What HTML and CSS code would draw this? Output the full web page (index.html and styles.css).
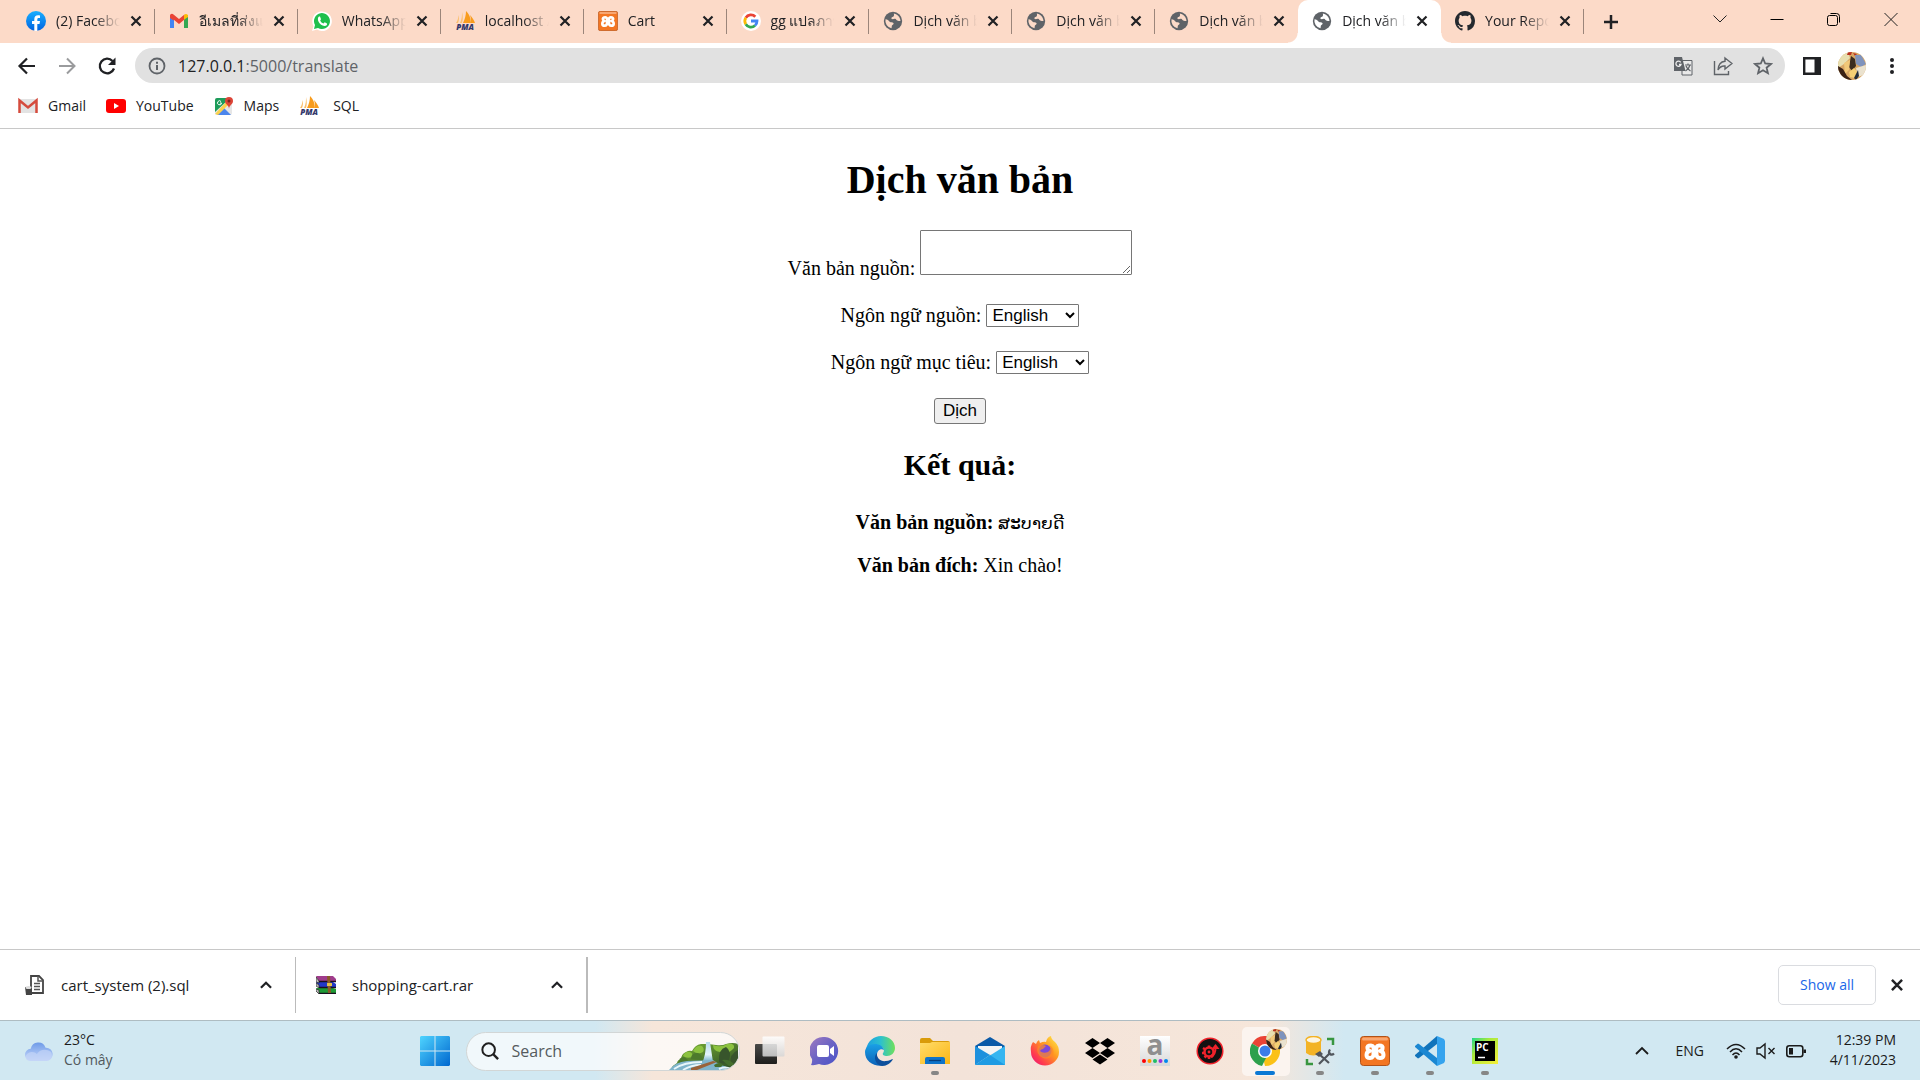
FILE: index.html
```html
<!DOCTYPE html>
<html lang="vi">
<head>
<meta charset="utf-8">
<title>Dịch văn bản</title>
<link rel="stylesheet" href="styles.css">
</head>
<body>
<svg class="defs" width="0" height="0" aria-hidden="true">
  <defs>
    <linearGradient id="fbg" x1="0" y1="0" x2="0" y2="1"><stop offset="0" stop-color="#19afff"/><stop offset="1" stop-color="#0062e0"/></linearGradient>
    <linearGradient id="wing" x1="0" y1="0" x2="1" y2="1"><stop offset="0" stop-color="#4fd4ff"/><stop offset="1" stop-color="#0067cf"/></linearGradient>
    <linearGradient id="cloudg" x1="0" y1="0" x2="0" y2="1"><stop offset="0" stop-color="#6f9be8"/><stop offset="1" stop-color="#c8d9fa"/></linearGradient>
    <linearGradient id="chatg" x1="0" y1="0" x2="1" y2="1"><stop offset="0" stop-color="#a07bc0"/><stop offset=".5" stop-color="#6a63c4"/><stop offset="1" stop-color="#4a52c8"/></linearGradient>
    <linearGradient id="edgeg" x1="0" y1="0" x2="1" y2="0"><stop offset="0" stop-color="#1b9de2"/><stop offset=".5" stop-color="#2cc0cf"/><stop offset="1" stop-color="#6fe05a"/></linearGradient>
    <linearGradient id="edgeb" x1="0" y1="0" x2="0" y2="1"><stop offset="0" stop-color="#1aa0e6"/><stop offset="1" stop-color="#0c62b8"/></linearGradient>
    <linearGradient id="foldg" x1="0" y1="0" x2="1" y2="1"><stop offset="0" stop-color="#ffdc6b"/><stop offset="1" stop-color="#fcb614"/></linearGradient>
    <linearGradient id="ffg" x1="1" y1="0" x2="0" y2="1"><stop offset="0" stop-color="#fff44f"/><stop offset=".4" stop-color="#ff9a1f"/><stop offset=".75" stop-color="#ff3850"/><stop offset="1" stop-color="#e0108a"/></linearGradient>
    <linearGradient id="ag" x1="0" y1="0" x2="0" y2="1"><stop offset="0" stop-color="#fff"/><stop offset="1" stop-color="#d8d8d8"/></linearGradient>
    <linearGradient id="pcg" x1="0" y1="0" x2="1" y2="1"><stop offset="0" stop-color="#1fd88b"/><stop offset=".35" stop-color="#a8ea3c"/><stop offset="1" stop-color="#f6ee3a"/></linearGradient>
    <linearGradient id="darkg" x1="0" y1="0" x2="0" y2="1"><stop offset="0" stop-color="#4a4a48"/><stop offset="1" stop-color="#1e1e1c"/></linearGradient>
    <linearGradient id="paneg" x1="0" y1="0" x2="0" y2="1"><stop offset="0" stop-color="#fff"/><stop offset="1" stop-color="#d6d6d6"/></linearGradient>
    <linearGradient id="water" x1="0" y1="0" x2="0" y2="1"><stop offset="0" stop-color="#b9dcec"/><stop offset=".6" stop-color="#e4f4fa"/><stop offset="1" stop-color="#5fa3c0"/></linearGradient>
    <linearGradient id="hill" x1="0" y1="0" x2="1" y2="1"><stop offset="0" stop-color="#7db536"/><stop offset="1" stop-color="#2c4d25"/></linearGradient>
    <symbol id="close" viewBox="0 0 16 16"><path d="M3.5 3.5l9 9m0-9l-9 9" stroke="#202124" stroke-width="2.2" fill="none"/></symbol>
    <symbol id="globe" viewBox="0 0 24 24"><circle cx="12" cy="12" r="11" fill="#5f6368"/><path d="M3 10c2.500 0 3.500 1.500 5 3 1.200 1.200 3.500.2 4.500 1.500.8 1-.5 2-1.500 2.700-.8.600-.2 2.200-.8 3.600A9.200 9.200 0 0 1 3 10zM13 2.900c4 .5 6.500 3.500 7.500 6.600l.5 2.500c-1.500-.2-2.500.5-4-.5-1.500-1-1-1.800-2.500-2.200-1.300-.3-2.200 1-3.800.4-1.200-.5-.8-2 .5-2.400 1.500-.5 2.600-1.500 1.800-4.400z" fill="var(--tab)"/></symbol>
    <symbol id="pma" viewBox="0 0 20 20"><path d="M5 12C7 8 7 4 7 1c1 4 1 8 0 11zM1 12c2-3 2-5 3-8 0 3 0 6-1 8z" fill="#fbbf6c"/><path d="M8 12C10 8 11 4 11 0c4 4 5 8 4 12zM15 12c1-3 1-5 0-8 2 2 4 5 5 8z" fill="#f89c1e"/><text x="10" y="19" font-family="Open Sans,sans-serif" font-size="8" font-weight="800" font-style="italic" fill="#33386b" text-anchor="middle">PMA</text></symbol>
    <symbol id="xampp" viewBox="0 0 30 30"><rect x=".5" y=".5" width="29" height="29" rx="3" fill="#f37623" stroke="#b0521a"/><rect x="2" y="1.500" width="26" height="3" rx="1.500" fill="#f8a671"/><path d="M11 9.500q3.500 0 2.500 5.500h3q-1-5.500 2.500-5.500 4.500 0 3.500 3.300-.5 1.700-2.300 2.200 3.300.500 3.300 4 0 3-3.500 3-4 0-3.500-5.500h-3q.5 5.500-3.500 5.500-3.500 0-3.500-3 0-3.500 3.300-4-1.800-.5-2.300-2.200-1-3.300 3.500-3.300z" fill="none" stroke="#fff" stroke-width="4" stroke-linejoin="round"/></symbol>
    <symbol id="portrait" viewBox="0 0 28 28"><clipPath id="pc"><circle cx="14" cy="14" r="14"/></clipPath><g clip-path="url(#pc)"><path fill="#d9a765" d="M0 0h28v28H0z"/><path fill="#e8dfb0" d="M0 5l10-5 2 6-6 6-6 4z"/><path fill="#3a2c20" d="M13 4l4 3 1 7-4 5-3-4z"/><path fill="#f1c878" d="M6 11l6-3-1 10-4 4z"/><path fill="#b83021" d="M10 0l4 0-1 3-4 0zM15 1l4 1-2 2z"/><path fill="#7f93bd" d="M17 3l6 0 5 9-5 3-5-3z"/><path fill="#eae2cf" d="M18 16l10-3v9l-8 3z"/><path fill="#3a2114" d="M0 14l5 3 4 7 5 4H0z"/><path fill="#f5cf74" d="M11 20l5-4 4 5-3 5-5-1z"/><path fill="#232c3a" d="M16 26l4-8 1 6-3 4z"/></g></symbol>
    <symbol id="up" viewBox="0 0 16 16"><path d="M3.500 10.500L8 6l4.500 4.500" fill="none" stroke="#202124" stroke-width="2"/></symbol>
  </defs>
</svg>

<header class="browser">
  <div class="strip">
    <nav class="tabs">
      <div class="tab"><svg class="fav" viewBox="0 0 20 20"><circle cx="10" cy="10" r="10" fill="url(#fbg)"/><path d="M8.300 20v-7H6v-3h2.300V8.200c0-2.700 1.400-4 3.700-4 .8 0 1.500.1 2 .2v2.500h-1.300c-1.100 0-1.400.6-1.400 1.300V10H14l-.5 3h-2.200v7z" fill="#fff"/></svg><a href="#" class="title">(2) Facebook</a><button aria-label="Close tab"><svg><use href="#close"/></svg></button></div>
      <div class="tab"><svg class="fav" viewBox="0 0 20 20"><path d="M1 17V4l4 3v10z" fill="#4285f4"/><path d="M15 17V7l4-3v13z" fill="#34a853"/><path d="M1 7V5c0-2 2-3 3.500-1.500L10 8l5.500-4.500v5L10 13 4.500 8.500v1z" fill="#ea4335"/><path d="M15 8.800V4c2-2 4-.5 4 1v1z" fill="#fbbc04"/></svg><a href="#" class="title">อีเมลที่ส่งแล้ว</a><button aria-label="Close tab"><svg><use href="#close"/></svg></button></div>
      <div class="tab"><svg class="fav" viewBox="0 0 20 20"><path d="M0 20l1.500-5A9.800 9.800 0 1 1 5 18.600z" fill="#fff"/><path d="M2 18l1-4a8 8 0 1 1 3 3z" fill="#1fbf4c"/><path d="M7 5.500c-3 2.500.5 9 5.500 9.500 2 0 3-1.500 2.500-2.500l-2.300-1.200-1.200 1.200c-1.500-.5-2.700-1.700-3.300-3.100L9 8.300 8 5.600z" fill="#fff"/></svg><a href="#" class="title">WhatsApp</a><button aria-label="Close tab"><svg><use href="#close"/></svg></button></div>
      <div class="tab"><svg class="fav"><use href="#pma"/></svg><a href="#" class="title">localhost / 127</a><button aria-label="Close tab"><svg><use href="#close"/></svg></button></div>
      <div class="tab"><svg class="fav"><use href="#xampp"/></svg><a href="#" class="title">Cart</a><button aria-label="Close tab"><svg><use href="#close"/></svg></button></div>
      <div class="tab"><svg class="fav" viewBox="0 0 20 20"><circle cx="10" cy="10" r="10" fill="#fff"/><g fill="none" stroke-width="2.800"><path d="M4.800 6.800A6 6 0 0 1 14.300 5.800" stroke="#ea4335"/><path d="M4.800 13.200a6 6 0 0 1 0-6.400" stroke="#fbbc05"/><path d="M14 14.500a6 6 0 0 1-9.200-1.300" stroke="#34a853"/><path d="M10 10h6a6 6 0 0 1-2 4.500" stroke="#4285f4"/></g></svg><a href="#" class="title">gg แปลภาษา</a><button aria-label="Close tab"><svg><use href="#close"/></svg></button></div>
      <div class="tab"><svg class="fav"><use href="#globe"/></svg><a href="#" class="title">Dịch văn bản</a><button aria-label="Close tab"><svg><use href="#close"/></svg></button></div>
      <div class="tab"><svg class="fav"><use href="#globe"/></svg><a href="#" class="title">Dịch văn bản</a><button aria-label="Close tab"><svg><use href="#close"/></svg></button></div>
      <div class="tab before"><svg class="fav"><use href="#globe"/></svg><a href="#" class="title">Dịch văn bản</a><button aria-label="Close tab"><svg><use href="#close"/></svg></button></div>
      <div class="tab active"><svg class="fav"><use href="#globe"/></svg><a href="#" class="title">Dịch văn bản</a><button aria-label="Close tab"><svg><use href="#close"/></svg></button></div>
      <div class="tab"><svg class="fav" viewBox="0 0 16 16"><path fill="#24292f" d="M8 0C3.580 0 0 3.580 0 8c0 3.540 2.290 6.530 5.470 7.590.4.070.55-.17.55-.38 0-.19-.01-.82-.01-1.490-2.010.37-2.530-.49-2.690-.94-.09-.23-.48-.94-.82-1.130-.28-.15-.68-.52-.01-.53.63-.01 1.080.58 1.230.82.720 1.210 1.870.87 2.330.66.070-.52.280-.87.510-1.070-1.780-.2-3.640-.89-3.640-3.950 0-.87.310-1.590.82-2.150-.08-.2-.36-1.020.08-2.120 0 0 .67-.21 2.200.82.640-.18 1.320-.27 2-.27s1.360.09 2 .27c1.530-1.040 2.200-.82 2.200-.82.440 1.100.160 1.920.08 2.120.510.560.82 1.270.82 2.150 0 3.070-1.870 3.750-3.650 3.950.290.250.540.730.540 1.480 0 1.070-.01 1.930-.01 2.200 0 .21.150.46.550.38A8.010 8.010 0 0 0 16 8c0-4.420-3.580-8-8-8z"/></svg><a href="#" class="title">Your Repositories</a><button aria-label="Close tab"><svg><use href="#close"/></svg></button></div>
    </nav>
    <button class="newtab" aria-label="New tab"><svg width="16" height="16" viewBox="0 0 16 16"><path d="M8 1v14M1 8h14" stroke="#202124" stroke-width="2.500"/></svg></button>
    <div class="winctl">
      <button aria-label="Search tabs"><svg viewBox="0 0 16 16"><path d="M1.500 4.500L8 11l6.500-6.500" fill="none" stroke="#222"/></svg></button>
      <button aria-label="Minimize"><svg viewBox="0 0 16 16"><path d="M1.500 8.500h13" stroke="#000"/></svg></button>
      <button aria-label="Restore"><svg viewBox="0 0 16 16"><rect x="1.500" y="4.500" width="10" height="10" rx="2" fill="none" stroke="#000"/><path d="M4.500 2.500h6q3 0 3 3v6" fill="none" stroke="#000"/></svg></button>
      <button aria-label="Close"><svg viewBox="0 0 16 16"><path d="M1.500 2l13 13m0-13l-13 13" stroke="#222"/></svg></button>
    </div>
  </div>

  <div class="toolbar">
    <button aria-label="Back"><svg viewBox="0 0 20 20"><path d="M18 10H3m7-7.500L2.500 10l7.500 7.500" fill="none" stroke="#202124" stroke-width="2.200"/></svg></button>
    <button aria-label="Forward"><svg viewBox="0 0 20 20"><path d="M2 10h15m-7-7.500l7.500 7.500-7.500 7.500" fill="none" stroke="#9a9b9d" stroke-width="2"/></svg></button>
    <button aria-label="Reload"><svg viewBox="0 0 20 20"><path d="M17 12.500A7.300 7.300 0 1 1 15.500 5" fill="none" stroke="#202124" stroke-width="2.300"/><path d="M18.500 1.500V9H11z" fill="#202124"/></svg></button>
    <div class="omnibox">
      <svg class="info" viewBox="0 0 18 18"><circle cx="9" cy="9" r="7.500" fill="none" stroke="#5f6368" stroke-width="1.800"/><path d="M9 8v5M9 4.700v2" stroke="#5f6368" stroke-width="2"/></svg>
      <span class="url"><span class="host">127.0.0.1</span>:5000/translate</span>
      <svg class="oi" viewBox="0 0 20 20"><path d="M9 4.500h10V19H9z" fill="#e9e9e9" stroke="#5f6368"/><path d="M1 1h8l3.500 14H1z" fill="#5f6368"/><path d="M7.700 6.300A2.600 2.600 0 1 0 8 8.500H6" stroke="#eee" stroke-width="1.300" fill="none"/><path d="M12 9h6m-3-1.500V9m2 0q-1 4-4.500 6M13 10q1 3 4.500 5" stroke="#5f6368" stroke-width="1.200" fill="none"/></svg>
      <svg class="oi" viewBox="0 0 20 20"><path d="M1.500 5v13.500h14V15" fill="none" stroke="#5f6368" stroke-width="1.400"/><path d="M12 2l7 5.500-7 5.500V10q-4.500-.5-7 4Q5.500 6 12 5.300z" fill="none" stroke="#5f6368" stroke-width="1.400"/></svg>
      <svg class="oi" viewBox="0 0 20 20"><path d="M10 2.300l2.200 5.200 5.700.5-4.300 3.700 1.300 5.500-4.900-3-4.900 3 1.300-5.500L2.100 8l5.700-.5z" fill="none" stroke="#5f6368" stroke-width="1.800"/></svg>
    </div>
    <div class="right">
      <button aria-label="Side panel"><svg class="s18" viewBox="0 0 18 18"><path d="M1.200 1.200h15.600v15.600H1.200z" fill="#fff" stroke="#202124" stroke-width="2.400"/><path d="M11.500 1H18v16h-6.500z" fill="#202124"/></svg></button>
      <button aria-label="Profile"><svg class="s28"><use href="#portrait"/></svg></button>
      <button aria-label="Menu"><svg class="s18" viewBox="0 0 18 18"><circle cx="9" cy="3" r="2" fill="#202124"/><circle cx="9" cy="9" r="2" fill="#202124"/><circle cx="9" cy="15" r="2" fill="#202124"/></svg></button>
    </div>
  </div>

  <nav class="bookmarks">
    <a href="#"><svg viewBox="0 0 20 20"><path d="M1 3h18v14H1z" fill="#e3e3e3"/><path d="M1.500 17V4.500l8.500 7 8.500-7V17" fill="none" stroke="#d54b3d" stroke-width="2.500"/></svg>Gmail</a>
    <a href="#"><svg viewBox="0 0 20 20"><rect y="3" width="20" height="14" rx="3" fill="#f00"/><path d="M8 7l5 3-5 3z" fill="#fff"/></svg>YouTube</a>
    <a href="#"><svg viewBox="0 0 20 20"><rect x="1" y="2" width="17" height="17" rx="2" fill="#e6e6e6"/><path d="M1 16V4q0-2 2-2h10v3z" fill="#1d9c5a"/><path d="M3 19l7-7 7 7z" fill="#4b86ed"/><path d="M1 18L13 5l2 3L4 19z" fill="#fcd24c"/><path d="M15 13c0-4-4-4.500-4-8a4 4 0 0 1 8 0c0 3.500-4 4-4 8z" fill="#dc4437"/><circle cx="15" cy="5" r="1.500" fill="#7a241b"/><path d="M7 5.500A2 2 0 1 0 7.500 7H6" fill="none" stroke="#fff"/></svg>Maps</a>
    <a href="#" class="sql"><svg><use href="#pma"/></svg>SQL</a>
  </nav>
</header>

<main class="page">
  <h1>Dịch văn bản</h1>
  <form>
    <div class="row"><label for="src">Văn bản nguồn:</label> <textarea id="src"></textarea></div>
    <div class="row"><label for="from">Ngôn ngữ nguồn:</label> <select id="from"><option>English</option></select></div>
    <div class="row"><label for="to">Ngôn ngữ mục tiêu:</label> <select id="to"><option>English</option></select></div>
    <div class="row"><button type="button" class="submit">Dịch</button></div>
  </form>
  <h2>Kết quả:</h2>
  <p><strong>Văn bản nguồn:</strong> <span lang="lo" class="lao">ສະບາຍດີ</span></p>
  <p><strong>Văn bản đích:</strong> Xin chào!</p>
</main>

<aside class="downloads">
  <div class="dl"><svg class="file" viewBox="0 0 20 20"><path d="M6 1h8l4 4v13H6z" fill="#fff" stroke="#444" stroke-width="1.800"/><path d="M13 1v5h5M9 8.500h6M9 11.500h6M9 14.500h6" stroke="#555" stroke-width="1.500" fill="none"/><path d="M0 12h7v8H1z" fill="#444"/><ellipse cx="3.500" cy="12.500" rx="3" ry="1.500" fill="#ddd"/></svg><a href="#">cart_system (2).sql</a><button aria-label="Options"><svg><use href="#up"/></svg></button></div>
  <div class="dl"><svg class="file" viewBox="0 0 20 20"><path d="M0 1h17l3 3v3H3z" fill="#a03c8c"/><path d="M0 7h17l3 2v3H3z" fill="#2238c8"/><path d="M0 13h17l3 1v4H3z" fill="#1e9a35"/><path d="M0 2l3 4v2L0 7zm0 6l3 2v3l-3-2zm0 6l3 1v4l-3-3z" fill="#bbb" stroke="#222" stroke-width=".7"/><path d="M3 6.500h17M3 12.500h17M3 18.300h17" stroke="#1a1020" stroke-width="1.300"/><path d="M11 1h3l1 17h-3z" fill="#8a5a28"/><path d="M11 8h5v3h-5z" fill="#e5c04a"/></svg><a href="#">shopping-cart.rar</a><button aria-label="Options"><svg><use href="#up"/></svg></button></div>
  <button class="showall">Show all</button>
  <button class="dismiss" aria-label="Close downloads"><svg width="18" height="18"><use href="#close"/></svg></button>
</aside>

<footer class="taskbar">
  <div class="weather">
    <svg width="30" height="22" viewBox="0 0 26 20"><path d="M6 19a5.500 5.500 0 0 1-.5-11A7 7 0 0 1 19 7a6 6 0 0 1 1 12z" fill="url(#cloudg)"/><path d="M5 19c-3 0-4.500-2-4-4.500C3 10 9 10 11 13c3-5 9-5 13-2 2 4-.5 8-4 8z" fill="#c3d4f7" opacity=".7"/></svg>
    <div class="stack"><span>23°C</span><span class="dim">Có mây</span></div>
  </div>
  <div class="apps">
    <button class="app" aria-label="Start"><svg viewBox="0 0 30 30"><path d="M1 0h13.500v14.500H0V1zM15.500 0H29l1 1v13.500H15.500zM0 15.500h14.500V30H1l-1-1zM15.500 15.500H30V29l-1 1H15.500z" fill="url(#wing)"/></svg></button>
    <div class="search">
      <svg class="mag" viewBox="0 0 20 20"><circle cx="8.500" cy="8.500" r="7" fill="none" stroke="#1f1f1f" stroke-width="2.200"/><path d="M13.500 13.500L19 19" stroke="#1f1f1f" stroke-width="2.600"/></svg>
      <input type="text" placeholder="Search" aria-label="Search">
      <svg class="scene" viewBox="0 0 70 28"><path d="M2 27q2-4 6-6 1-4 4-3 0-6 5-8 3-2 6-1 3-6 9-7l7 0 8 1q6 1 10-1 7-2 12 0v15l-5 10z" fill="url(#hill)"/><path d="M14 14q2-5 7-4 4 2 2 5-5 2-9-1zM24 9q3-6 9-5 3 3 1 6-5 3-10-1zM44 3q8 3 14-1 8-1 7 4-6 7-14 4-7-1-7-7z" fill="#8cc23f"/><path d="M50 20q-1-13 7-15 6 4 3 14-5 5-10 1zM62 22q-2-10 7-14v14z" fill="#38552c"/><path d="M10 22q-1-7 5-7 5 2 4 7zM22 17q0-7 7-6 5 3 4 7z" fill="#4d7a2c"/><path d="M37 0h4l3 20-11 1q4-8 4-21z" fill="url(#water)"/><path d="M0 28q6-8 18-9l26-1q4 4 22 10z" fill="#7fb4ca"/><path d="M5 27q10-7 28-7M14 28q8-5 18-5M50 27q6-3 12 0" stroke="#e8f6fa" stroke-width="2" fill="none"/><path d="M22 26l22-7 4 1-20 8h-6z" fill="#9a6238"/><path d="M45 23q6-4 9 0l-2 2h-6zM53 18q8-1 13 5l-6 1z" fill="#456f2c"/></svg>
    </div>
    <button class="app" aria-label="Task view"><svg viewBox="0 0 30 30"><rect y="8" width="22" height="20" rx="1" fill="url(#darkg)"/><rect x="7.500" y=".5" width="22" height="20" rx="1" fill="url(#paneg)" opacity=".85"/></svg></button>
    <button class="app" aria-label="Chat"><svg viewBox="0 0 30 30"><path d="M15 1a14 14 0 1 1-6 27q-4 1.500-8 1 1.500-3 1-6A14 14 0 0 1 15 1z" fill="url(#chatg)"/><rect x="7" y="9" width="12" height="12" rx="2" fill="#fff"/><path d="M20 13l4-3v10l-4-3z" fill="#fff"/></svg></button>
    <button class="app" aria-label="Edge"><svg viewBox="0 0 30 30"><path d="M1 13C3 5 9 0 16 0c8 0 14 5 14 12 0 5-4 8-8 8-3 0-5-1-4-3 2-2 1-7-5-7-5 0-9 2-12 3z" fill="url(#edgeg)"/><path d="M0 16c0-5 5-8 10-8 4 0 8 2 9 6-3-2-7 0-7 5 0 6 5 9 9 10C10 32 0 26 0 16z" fill="url(#edgeb)"/><path d="M12 17c-1 5 4 9 9 8 3 0 6-2 7-2-2 4-6 7-11 7-7-1-9-10-5-13z" fill="#0d4f9c"/></svg></button>
    <button class="app run" aria-label="File Explorer"><svg viewBox="0 0 30 30"><path d="M0 4q0-2 2-2h8l3 3h15q2 0 2 2v5H0z" fill="#d99b0a"/><path d="M0 7h10l2-1h18v22H0z" fill="url(#foldg)"/><path d="M5 28v-5q0-2 2-2h16q2 0 2 2v5z" fill="#0f74c9"/><path d="M9 24.500h12" stroke="#063f7d" stroke-width="1.300"/></svg></button>
    <button class="app" aria-label="Mail"><svg viewBox="0 0 30 30"><path d="M0 10l15-9 15 9-3 6H3z" fill="#0a5aa8"/><path d="M3 10h24v8H3z" fill="#f4f4f4"/><path d="M0 10l15 9-15 10z" fill="#1d90dd"/><path d="M30 10L0 29h30z" fill="#36b5f0"/><path d="M15 19l15 10H0z" fill="#1f9be3"/></svg></button>
    <button class="app" aria-label="Firefox"><svg viewBox="0 0 30 30"><path d="M3 6l3 2q1-3 3-4l1 3q4-2 6-1 1-5 5-6 0 3 4 6 4 4 4 10A14 13.500 0 0 1 1 16Q0 10 3 6z" fill="url(#ffg)"/><circle cx="15" cy="15" r="6.500" fill="#7a48dc"/><path d="M8 10q5-2 8 0l-3 3q-2 0-3 2 3 3 8 1 4-3 1-7 6 3 4 10-4 5-10 3-8-4-5-12z" fill="#ff8a25" opacity=".75"/></svg></button>
    <button class="app" aria-label="Dropbox"><svg viewBox="0 0 30 30"><path d="M7.500 2l7.500 5-7.500 5L0 7zM22.500 2L30 7l-7.500 5L15 7zM7.500 12l7.500 5-7.500 5L0 17zM22.500 12l7.500 5-7.500 5-7.500-5zM15 18.500l7.500 5-7.500 5-7.500-5z" fill="#000"/></svg></button>
    <button class="app" aria-label="a"><svg viewBox="0 0 30 30"><path d="M0 0h30v30H0z" fill="url(#ag)"/><text x="15" y="19" font-family="Open Sans,sans-serif" font-weight="700" font-size="28" text-anchor="middle" fill="#8f8f8f">a</text><circle cx="4" cy="25" r="2" fill="#f00"/><circle cx="9.500" cy="25" r="2" fill="#f90"/><circle cx="15" cy="25" r="2" fill="#2b6"/><circle cx="20.500" cy="25" r="2" fill="#93d"/><circle cx="26" cy="25" r="2" fill="#08e"/></svg></button>
    <button class="app" aria-label="Gear"><svg viewBox="0 0 30 30"><circle cx="15" cy="15" r="12.800" fill="#111" stroke="#f0222b" stroke-width="1.500"/><circle cx="14" cy="16" r="4.500" fill="none" stroke="#f0222b" stroke-width="2.500"/><path d="M14 9.500V12M8 12l2.500 1.500M7 17h3M9.500 21.500l2-2M14 23v-3M18 21l-2-2" stroke="#f0222b" stroke-width="2.500"/><path d="M16 21q4.500-2 4.500-9" fill="none" stroke="#f0222b" stroke-width="2"/><path d="M16.500 13l4-5 4 5z" fill="#f0222b"/><circle cx="14" cy="16" r="1.400" fill="#f0222b"/></svg></button>
    <button class="app current" aria-label="Chrome"><svg viewBox="0 0 30 30"><path d="M15 15L2 7.500A15 15 0 0 1 28 7.500z" fill="#ea4335"/><path d="M15 15l13-7.500A15 15 0 0 1 15 30l-1-4z" fill="#fbc116"/><path d="M15 15l1 7-4 8A15 15 0 0 1 2 7.500z" fill="#2da04c"/><circle cx="15" cy="15" r="7" fill="#fff"/><circle cx="15" cy="15" r="5.500" fill="#3b7de9"/></svg><svg class="badge"><use href="#portrait"/></svg></button>
    <button class="app run" aria-label="SQL tools"><svg viewBox="0 0 30 30"><path d="M1 4v13q7 5 15 0V4z" fill="#f3b326"/><ellipse cx="8.500" cy="4" rx="7.500" ry="3.500" fill="#fdf5e2" stroke="#f3b326" stroke-width="1.500"/><path d="M22 3h6v6M2 23v5h6" fill="none" stroke="#389640" stroke-width="2.500"/><path d="M14 18l10 9M25 17L14 28" stroke="#51565c" stroke-width="2.200"/><path d="M10 18l5-3 3 3-4 3z" fill="#51565c"/><path d="M25 13.500q-2 3 0 4.500t4-.5" stroke="#51565c" stroke-width="2.200" fill="none"/></svg></button>
    <button class="app run" aria-label="XAMPP"><svg><use href="#xampp"/></svg></button>
    <button class="app run" aria-label="Visual Studio Code"><svg viewBox="0 0 30 30"><path d="M22 0l7 3 1 2v20l-1 2-7 3z" fill="#35a3ee"/><path d="M22 0v8L4 22l-1 .5-3-2.500v-1z" fill="#1073bb"/><path d="M22 30v-8L4 8l-1-.5L0 10v1z" fill="#1b87d2"/></svg></button>
    <button class="app run" aria-label="PyCharm"><svg viewBox="0 0 30 30"><path d="M2 2h26v26H2z" fill="url(#pcg)"/><path d="M5 5h20v20H5z" fill="#000"/><text x="6" y="15" font-family="Open Sans,sans-serif" font-weight="700" font-size="10" fill="#fff">PC</text><path d="M8 21.500h7" stroke="#fff" stroke-width="1.500"/></svg></button>
  </div>
  <div class="tray">
    <svg width="16" height="16" viewBox="0 0 16 16"><path d="M2 11l6-6 6 6" fill="none" stroke="#1b1b1b" stroke-width="1.800"/></svg>
    <span class="lang">ENG</span>
    <div class="status">
      <svg viewBox="0 0 20 20"><g fill="none" stroke="#1b1b1b" stroke-width="1.500"><path d="M1 8q9-9 18 0M4 11q6-6.500 12 0M6.500 14q3.500-4 7 0"/></g><circle cx="10" cy="16" r="1.800" fill="#1b1b1b"/></svg>
      <svg viewBox="0 0 20 20"><path d="M1 7h3l5-4v14l-5-4H1zM12.500 7l6 6m0-6l-6 6" fill="none" stroke="#1b1b1b" stroke-width="1.400"/></svg>
      <svg viewBox="0 0 20 20"><rect x=".8" y="4.800" width="16" height="11" rx="2.500" fill="none" stroke="#1b1b1b" stroke-width="1.600"/><path d="M3 7h4v6.500H3zM17.500 8.500H20v3.500h-2.500z" fill="#1b1b1b"/></svg>
    </div>
    <div class="stack clock"><span>12:39 PM</span><span>4/11/2023</span></div>
  </div>
</footer>
</body>
</html>
```
FILE: styles.css
```css
* { box-sizing: border-box; }

body {
  margin: 0;
  min-height: 100vh;
  display: flex;
  flex-direction: column;
  background: #fff;
  color: #202124;
  font: 14px/20px "Open Sans", "Noto Sans", sans-serif;
}

button {
  padding: 0;
  border: 0;
  background: none;
  color: inherit;
  font: inherit;
}

a { color: inherit; text-decoration: none; }
svg { display: block; flex: none; }
.defs { position: absolute; }

/* Tab strip */
.strip {
  display: flex;
  height: 43px;
  padding-left: 12px;
  background: #fcdac8;
}
.tabs { display: flex; flex: 1; min-width: 0; }
.tab {
  --tab: #fcdac8;
  position: relative;
  flex: 1 1 0;
  min-width: 0;
  display: flex;
  align-items: center;
  padding: 0 11px 2px 14px;
}
.tab::after {
  content: "";
  position: absolute;
  right: 0;
  top: 9px;
  width: 1px;
  height: 25px;
  background: #9b857a;
}
.tab.before::after { display: none; }
.tab.active { --tab: #fff; background: #fff; border-radius: 10px 10px 0 0; }
.tab.active::before,
.tab.active::after {
  content: "";
  position: absolute;
  top: auto;
  bottom: 0;
  width: 10px;
  height: 10px;
}
.tab.active::before { left: -10px; background: radial-gradient(circle at 0 0, #fcdac8 9px, #fff 10px); }
.tab.active::after { right: -10px; background: radial-gradient(circle at 100% 0, #fcdac8 9px, #fff 10px); }
.fav { width: 20px; height: 20px; margin-right: 10px; }
.title {
  flex: 1;
  min-width: 0;
  overflow: hidden;
  white-space: nowrap;
  margin-right: 8px;
  mask-image: linear-gradient(to right, #000 60%, transparent);
}
.tab button svg { width: 16px; height: 16px; }
.newtab { width: 54px; display: grid; place-items: center; }
.winctl { display: flex; width: 282px; padding: 0 0 6px 53px; }
.winctl button { flex: 1; display: grid; place-items: center; }
.winctl svg { width: 16px; height: 16px; }

/* Address row */
.toolbar { display: flex; align-items: center; height: 45px; padding-left: 7px; }
.toolbar > button { width: 40px; display: grid; place-items: center; }
.toolbar > button svg { width: 20px; height: 20px; }
.omnibox {
  flex: 1;
  display: flex;
  align-items: center;
  gap: 20px;
  height: 35px;
  margin-left: 8px;
  padding: 0 12px 0 13px;
  border-radius: 18px;
  background: #e1e1e1;
}
.info { width: 18px; height: 18px; margin-right: -8px; }
.url { flex: 1; font-size: 16px; color: #5f6368; }
.host { color: #202124; }
.oi { width: 20px; height: 20px; }
.right { display: flex; align-items: center; width: 135px; padding: 0 8px 0 7px; }
.right button { flex: 1; display: grid; place-items: center; }
.s18 { width: 18px; height: 18px; }
.s28 { width: 28px; height: 28px; }

.bookmarks {
  display: flex;
  gap: 20px;
  height: 41px;
  padding: 0 18px 4px;
  border-bottom: 1px solid #c8c8c8;
}
.bookmarks a { display: flex; align-items: center; gap: 10px; }
.bookmarks .sql { gap: 14px; }
.bookmarks svg { width: 20px; height: 20px; }

/* Translation page */
.page {
  flex: 1;
  padding: 28px 10px;
  color: #000;
  text-align: center;
  font: 20px/23px "Liberation Serif", "Times New Roman", serif;
}
h1 { margin: 0 0 27px; font-size: 40px; line-height: 46px; }
h2 { margin: 24px 0 29px; font-size: 30px; line-height: 34px; }
p { margin: 20px 0; }
.lao { font: 200 17px/20px "DejaVu Sans Light", "DejaVu Sans", sans-serif; }
.row { margin-bottom: 24px; }
.row textarea {
  width: 212px;
  height: 45px;
  margin: 0;
  vertical-align: baseline;
  border: 1px solid #767676;
  border-radius: 1px;
}
.row select {
  width: 93px;
  height: 23px;
  padding: 0 2px 0 1px;
  vertical-align: top;
  border: 1px solid #767676;
  border-radius: 1px;
  background-color: #fff;
  color: #000;
  font: 17px "Liberation Sans", Arial, sans-serif;
}
.submit {
  display: inline-block;
  vertical-align: top;
  width: 52px;
  height: 26px;
  border: 1px solid #767676;
  border-radius: 3px;
  background: #efefef;
  color: #000;
  font: 17px "Liberation Sans", Arial, sans-serif;
}

/* Download shelf */
.downloads {
  display: flex;
  align-items: center;
  height: 71px;
  padding-right: 14px;
  border-top: 1px solid #c8c8c8;
}
.dl {
  display: flex;
  align-items: center;
  width: 296px;
  height: 56px;
  padding: 0 20px 0 25px;
  border-right: 1px solid #bbb;
}
.dl + .dl { width: 292px; padding-left: 20px; border-right-width: 2px; }
.dl .file { width: 20px; height: 20px; margin-right: 16px; }
.dl a { flex: 1; font-size: 15px; }
.dl button svg { width: 18px; height: 18px; }
.showall {
  width: 98px;
  height: 40px;
  margin-left: auto;
  border: 1px solid #dadce0;
  border-radius: 5px;
  color: #1a66e8;
}
.dismiss { margin-left: 12px; }

/* Taskbar */
.taskbar {
  display: grid;
  grid-template-columns: 1fr auto 1fr;
  align-items: center;
  height: 60px;
  border-top: 1px solid #aebcc2;
  background: linear-gradient(to right, #d1e8f2 31%, #f6e6da 34%, #f3e3d9 50%, #f6e6da 66%, #d1e8f2 70%);
  color: #1b1b1b;
}
.weather { display: flex; align-items: center; gap: 10px; padding-left: 24px; }
.stack { display: flex; flex-direction: column; padding-bottom: 2px; }
.dim { color: #51595d; }
.apps { display: flex; align-items: center; }
.app {
  position: relative;
  width: 55px;
  height: 60px;
  display: grid;
  place-items: center;
}
.app > svg { width: 30px; height: 30px; z-index: 1; }
.run::after,
.current::after {
  content: "";
  position: absolute;
  bottom: 6px;
  width: 8px;
  height: 4px;
  border-radius: 2px;
  background: #868686;
}
.current::after { width: 20px; background: #0b78d4; }
.current::before {
  content: "";
  position: absolute;
  inset: 6px 3px 5px 4px;
  border-radius: 5px;
  background: #fbf4ef;
}
.current .badge { position: absolute; top: 8px; right: 6px; width: 21px; height: 21px; }
.search {
  display: flex;
  align-items: center;
  width: 274px;
  height: 39px;
  margin: 0 3px;
  padding-left: 14px;
  overflow: hidden;
  border: 1px solid #d2d6d6;
  border-radius: 20px;
  background: rgba(255, 255, 255, .7);
}
.mag { width: 18px; height: 18px; }
.search input {
  flex: 1;
  min-width: 0;
  padding: 0 0 0 13px;
  border: 0;
  background: none;
  font: 16px/20px "Open Sans", sans-serif;
}
.search input::placeholder { color: #555b5e; }
.scene { width: 70px; height: 28px; align-self: flex-end; }
.tray { display: flex; align-items: center; justify-content: flex-end; padding-right: 24px; }
.lang { margin: 0 22px 0 26px; }
.status { display: flex; gap: 10px; }
.status svg { width: 20px; height: 20px; }
.clock { width: 90px; text-align: right; }
```
